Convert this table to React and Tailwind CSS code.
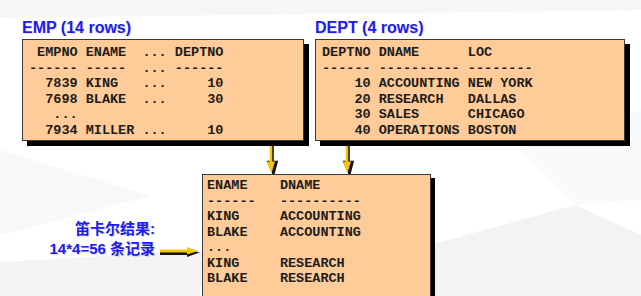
import React from "react";

const empRows = [
  " EMPNO ENAME  ... DEPTNO",
  "------ -----  ... ------",
  "  7839 KING   ...     10",
  "  7698 BLAKE  ...     30",
  "   ...",
  "  7934 MILLER ...     10",
];

const deptRows = [
  "DEPTNO DNAME      LOC",
  "------ ---------- --------",
  "    10 ACCOUNTING NEW YORK",
  "    20 RESEARCH   DALLAS",
  "    30 SALES      CHICAGO",
  "    40 OPERATIONS BOSTON",
];

const resultRows = [
  "ENAME    DNAME",
  "------   ----------",
  "KING     ACCOUNTING",
  "BLAKE    ACCOUNTING",
  "...",
  "KING     RESEARCH",
  "BLAKE    RESEARCH",
];

const mono = "font-['Liberation_Mono','DejaVu_Sans_Mono',monospace]";

// down arrow between the source tables and the result
const DownArrow = () => (
  <svg width="12" height="28" viewBox="0 0 12 28">
    <path d="M6.5 0 V18 M2.5 16 L7.5 27.5 L10.5 16 Z" stroke="#111" strokeWidth="2.5" fill="#111" />
    <path d="M5 0 V17" stroke="#f7c600" strokeWidth="2.5" />
    <path d="M1 15.5 L5.5 27 L9 15.5 Z" fill="#f7c600" />
  </svg>
);

const RightArrow = () => (
  <svg width="41" height="12" viewBox="0 0 41 12">
    <path d="M1 7.5 H30" stroke="#111" strokeWidth="3" />
    <path d="M28 2.5 L40.5 6.5 L28 11 Z" fill="#111" />
    <path d="M1 5 H30" stroke="#f7c600" strokeWidth="3" />
    <path d="M28 1 L39 5 L28 8.5 Z" fill="#f7c600" />
  </svg>
);

const TableBox = ({ rows, className }) => (
  <div
    className={`bg-[#ffcc99] border border-[#3a3a3a] text-[#1c1c1c] font-bold text-[13.5px] leading-[15.5px] whitespace-pre ${mono} ${className}`}
  >
    {rows.map((r, i) => (
      <div key={i}>{r || " "}</div>
    ))}
  </div>
);

const Title = ({ children }) => (
  <div className="h-[18px] mb-[2px] text-[16px] leading-[18px] font-bold text-[#1c1cf0] font-['Liberation_Sans',Arial,sans-serif] [text-shadow:1px_1px_1px_rgba(0,0,0,0.12)]">
    {children}
  </div>
);

export default function App() {
  return (
    <div className="relative w-[641px] h-[296px] overflow-hidden bg-white">
      {/* faint background facets */}
      <svg className="absolute inset-0" width="641" height="296" viewBox="0 0 641 296">
        <polygon points="0,0 641,0 641,10 0,18" fill="#f6f6f6" />
        <polygon points="0,150 150,196 0,235" fill="#f8f8f8" />
        <polygon points="0,296 0,262 210,250 200,296" fill="#f4f4f4" />
        <polygon points="430,245 575,205 641,235 641,296 430,296" fill="#f3f3f3" />
        <polygon points="520,150 641,110 641,200 575,205" fill="#fafafa" />
      </svg>

      <div className="relative pt-[19px] pl-[22px]">
        <div className="flex gap-[11px]">
          <div>
            <Title>EMP (14 rows)</Title>
            <TableBox rows={empRows} className="w-[282px] h-[102px] pl-[6px] pt-[5px] shadow-[5px_5px_0_#000]" />
          </div>
          <div>
            <Title>DEPT (4 rows)</Title>
            <TableBox rows={deptRows} className="w-[310px] h-[102px] pl-[6px] pt-[5px] shadow-[5px_5px_0_#000]" />
          </div>
        </div>

        <div className="flex h-[33px] pt-[5px]">
          <div className="ml-[244px]">
            <DownArrow />
          </div>
          <div className="ml-[64px]">
            <DownArrow />
          </div>
        </div>

        <div className="flex items-start">
          <div className="w-[133px] mt-[45px] text-right text-[15px] leading-[20px] font-bold text-[#1c1cf0] font-['Liberation_Sans','Noto_Sans_CJK_SC',sans-serif] [text-shadow:1px_1px_1px_rgba(0,0,0,0.15)]">
            <div>笛卡尔结果:</div>
            <div>14*4=56 条记录</div>
          </div>
          <div className="ml-[4px] mt-[72px]">
            <RightArrow />
          </div>
          <TableBox rows={resultRows} className="ml-[2px] w-[229px] h-[140px] pl-[4px] pt-[3px] shadow-[4px_4px_0_#000]" />
        </div>
      </div>
    </div>
  );
}
